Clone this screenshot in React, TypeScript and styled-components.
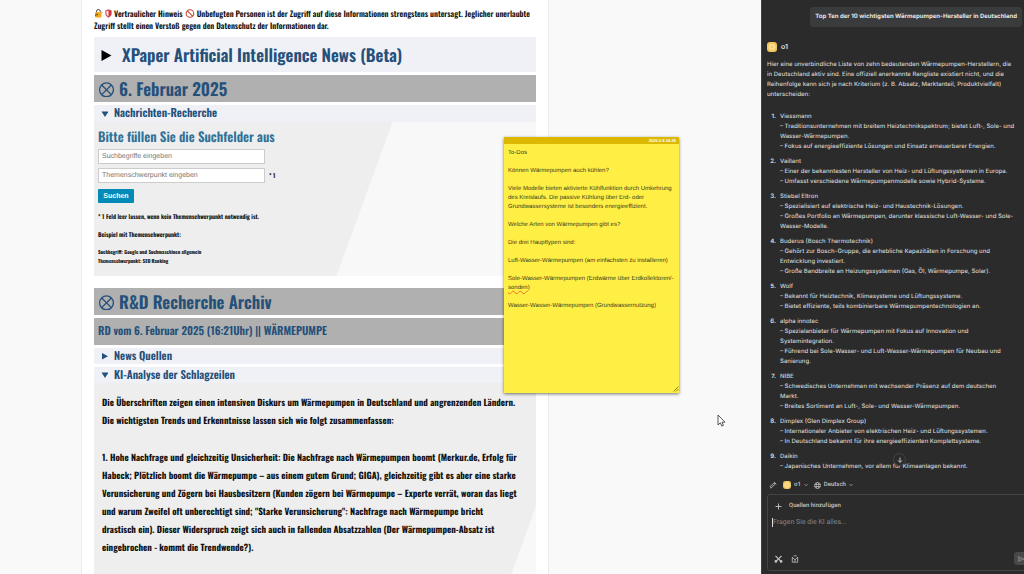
import React from "react";
import styled, { createGlobalStyle } from "styled-components";

const GlobalStyle = createGlobalStyle`
  *, *::before, *::after { box-sizing: border-box; }
  body { margin: 0; background: #f9f9f9; overflow: hidden; text-rendering: geometricPrecision; }
  h1, h2, h3, p, ol { margin: 0; padding: 0; }
  button, input, textarea { font: inherit; margin: 0; text-rendering: inherit; }
`;

const condensed = `Oswald, "Liberation Sans Narrow", "Open Sans Condensed", "Liberation Sans", sans-serif`;

const Page = styled.div`
  position: relative;
  display: grid;
  grid-template-columns: minmax(0, 1fr) 263px;
  height: 100vh;
  overflow: hidden;
`;

const Main = styled.main`
  background: #f9f9f9;
  padding-left: 81px;
  overflow: hidden;
`;

const Article = styled.article`
  display: flex;
  flex-direction: column;
  gap: 3px;
  max-width: 468px;
  min-height: 100vh;
  padding: 8px 12px 0;
  background: #fff;
  border: solid #ececec;
  border-width: 0 1px;
  font-family: ${condensed};
  font-weight: 700;
  color: #111;
`;

const Notice = styled.p`
  font-size: 8px;
  line-height: 12px;
  white-space: nowrap;
  margin-bottom: 2px;
  font-weight: 600;
  svg { vertical-align: -1px; margin-right: 2px; }
`;

const Bar = styled.div<{ $tone: "light" | "grey"; $h: number }>`
  display: flex;
  align-items: center;
  height: ${(p) => p.$h}px;
  flex: none;
  padding: 0 4px;
  background: ${(p) => (p.$tone === "grey" ? "#b0b0b0" : "#f0f1f6")};
  color: #24507a;
  white-space: nowrap;
`;

const Heading = styled.h2<{ $size: number }>`
  font-size: ${(p) => p.$size}px;
  line-height: 1;
  font-weight: 600;
`;

const Marker = styled.svg<{ $gap: number }>`
  flex: none;
  margin-right: ${(p) => p.$gap}px;
`;

const Section = styled.section`
  display: flex;
  flex-direction: column;
`;

const Archive = styled(Section)`
  gap: 3px;
  margin-top: 9px;
`;

const Panel = styled.div<{ $edge: number }>`
  background: linear-gradient(110deg, #eee ${(p) => p.$edge}px, #f8f8f8 ${(p) => p.$edge + 1}px);
`;

const SearchForm = styled.form`
  display: flex;
  flex-direction: column;
  align-items: flex-start;
  padding: 6px 4px 1px;
`;

const FormTitle = styled(Heading)`
  color: #2f7197;
  line-height: 16px;
  margin-bottom: 5px;
`;

const FieldRow = styled.label`
  display: flex;
  align-items: center;
  gap: 4px;
  margin-bottom: 4px;
  font-size: 6px;
`;

const Field = styled.input`
  width: 167px;
  height: 15px;
  padding: 0 3px;
  border: 1px solid #ccc;
  background: #fff;
  font: 7px "Liberation Sans", sans-serif;
  &::placeholder { color: #757575; opacity: 1; }
`;

const SearchButton = styled.button`
  height: 14px;
  width: 36px;
  margin: 2px 0 9px;
  padding: 0;
  border: 0;
  border-radius: 1px;
  background: #008ab5;
  color: #fff;
  font: 700 7px "Liberation Sans", sans-serif;
`;

const Hint = styled.p<{ $size: number }>`
  font-size: ${(p) => p.$size}px;
  line-height: 9px;
  margin-bottom: 9px;
  white-space: nowrap;
`;

const Analysis = styled.div`
  padding: 10px 8px 40px;
  font-size: 9px;
  line-height: 18px;
  white-space: nowrap;
  p + p { margin-top: 19px; }
`;

const Note = styled.aside`
  position: absolute;
  left: 504px;
  top: 137px;
  width: 175px;
  height: 256px;
  background: #ffef45;
  box-shadow: 0 1px 3px rgba(0, 0, 0, 0.55);
  font-family: "Liberation Sans", sans-serif;
  color: #3b3a20;
`;

const NoteHeader = styled.header`
  height: 7px;
  padding-right: 3px;
  background: #dcb900;
  color: #fff;
  text-align: right;
  font-size: 4px;
  font-weight: 700;
  line-height: 7px;
`;

const NoteBody = styled.div`
  padding: 5px 4px;
  font-size: 6px;
  line-height: 9px;
  white-space: nowrap;
  p + p { margin-top: 9px; }
`;

const Misspelt = styled.span`
  text-decoration: underline wavy #f07020 1px;
`;

const Grip = styled.svg`
  position: absolute;
  right: 0;
  bottom: 1px;
`;

const Pointer = styled.svg`
  position: absolute;
  left: 717px;
  top: 414px;
`;

const Sidebar = styled.aside`
  position: relative;
  display: flex;
  flex-direction: column;
  min-width: 0;
  height: 100vh;
  padding: 7px 2px 3px 5px;
  overflow: hidden;
  background: #2b2b2b;
  border-left: 1px solid #414141;
  color: #d2d2d2;
  font: 500 6px/10px Inter, Roboto, sans-serif;
`;

const Chat = styled.div`
  display: flex;
  flex-direction: column;
  flex: 1;
  min-height: 0;
  overflow: hidden;
  white-space: nowrap;
`;

const Question = styled.p`
  align-self: flex-end;
  padding: 5px;
  border-radius: 3px;
  background: #3a3b3d;
  color: #e6e6e6;
  font-weight: 700;
`;

const Author = styled.div`
  display: flex;
  align-items: center;
  gap: 4px;
  margin: 15px 0 8px;
  color: #e6e6e6;
  font-size: 7px;
  font-weight: 600;
`;

const Answers = styled.ol`
  display: flex;
  flex-direction: column;
  gap: 5px;
  margin-top: 12px;
  list-style: none;
`;

const Answer = styled.li`
  display: grid;
  grid-template-columns: 9px 1fr;
  column-gap: 4px;
  b { font-weight: 700; text-align: right; }
`;

const Options = styled.div`
  display: flex;
  align-items: center;
  gap: 6px;
  height: 18px;
  flex: none;
  padding-left: 2px;
`;

const Plain = styled.button`
  display: flex;
  align-items: center;
  gap: 3px;
  padding: 0;
  border: 0;
  background: none;
  color: #c4c4c4;
  font-family: Roboto, sans-serif;
  font-size: 6px;
  line-height: 10px;
  font-weight: 500;
`;

const Composer = styled.form`
  display: flex;
  flex-direction: column;
  flex: none;
  margin-right: -11px;
  height: 77px;
  padding: 6px 4px 5px 4px;
  border: 1px solid #444;
  border-radius: 3px;
`;

const Sources = styled(Plain)`
  gap: 7px;
  padding-left: 3px;
`;

const Prompt = styled.textarea`
  height: 9px;
  margin: 7px 0 auto;
  padding: 0;
  border: 0;
  border-left: 1px solid #ddd;
  background: none;
  color: #d2d2d2;
  font-family: Roboto, sans-serif;
  font-size: 7px;
  font-weight: 400;
  line-height: 9px;
  resize: none;
  overflow: hidden;
  &::placeholder { color: #858585; opacity: 1; }
`;

const Tools = styled.div`
  display: flex;
  align-items: center;
  gap: 8px;
  padding-left: 2px;
`;

const Send = styled.button`
  display: grid;
  place-items: center;
  width: 14px;
  height: 13px;
  margin-left: auto;
  padding: 0;
  border: 0;
  border-radius: 3px;
  background: #484848;
  color: #858585;
`;

const ScrollDown = styled.button`
  position: absolute;
  left: 131px;
  bottom: 108px;
  display: grid;
  place-items: center;
  width: 13px;
  height: 13px;
  padding: 0;
  border: 1px solid #444;
  border-radius: 50%;
  background: #2b2b2b;
  color: #d2d2d2;
`;

const Crossed = () => (
  <Marker $gap={5} width="16" height="16" viewBox="0 0 16 16" fill="none" stroke="#24507a" strokeWidth="1.3">
    <circle cx="8.5" cy="8.8" r="6.9" />
    <path d="M3.700 4l9.600 9.600M13.300 4l-9.600 9.600" />
  </Marker>
);

const Triangle = ({ open = false }: { open?: boolean }) => (
  <Marker $gap={6} width="10" height="10" viewBox="0 0 10 10" fill="#24507a">
    <path d={open ? "M3.5 2.5h7L7 8z" : "M4 2l6 3.2-6 3.3z"} />
  </Marker>
);

const Badge = ({ size }: { size: number }) => (
  <svg width={size} height={size} viewBox="0 0 10 10">
    <rect width="10" height="10" rx="3" fill="#f2c45c" />
    <circle cx="5" cy="5" r="3.3" fill="#fbe2a0" />
    <path d="M5 2.2v5.6M2.6 3.6l4.8 2.8M7.4 3.6L2.6 6.4" stroke="#f0bd50" strokeWidth=".5" />
  </svg>
);

const Chevron = () => (
  <svg width="4" height="4" viewBox="0 0 4 4" fill="none" stroke="currentColor" strokeWidth=".7">
    <path d="M.5 1.2L2 2.7l1.5-1.5" />
  </svg>
);

const makers: { name: string; lines: string[] }[] = [
  { name: "Viessmann", lines: ["– Traditionsunternehmen mit breitem Heiztechnikspektrum; bietet Luft-, Sole- und", "Wasser-Wärmepumpen.", "– Fokus auf energieeffiziente Lösungen und Einsatz erneuerbarer Energien."] },
  { name: "Vaillant", lines: ["– Einer der bekanntesten Hersteller von Heiz- und Lüftungssystemen in Europa.", "– Umfasst verschiedene Wärmepumpenmodelle sowie Hybrid-Systeme."] },
  { name: "Stiebel Eltron", lines: ["– Spezialisiert auf elektrische Heiz- und Haustechnik-Lösungen.", "– Großes Portfolio an Wärmepumpen, darunter klassische Luft-Wasser- und Sole-", "Wasser-Modelle."] },
  { name: "Buderus (Bosch Thermotechnik)", lines: ["– Gehört zur Bosch-Gruppe, die erhebliche Kapazitäten in Forschung und", "Entwicklung investiert.", "– Große Bandbreite an Heizungssystemen (Gas, Öl, Wärmepumpe, Solar)."] },
  { name: "Wolf", lines: ["– Bekannt für Heiztechnik, Klimasysteme und Lüftungssysteme.", "– Bietet effiziente, teils kombinierbare Wärmepumpentechnologien an."] },
  { name: "alpha innotec", lines: ["– Spezialanbieter für Wärmepumpen mit Fokus auf Innovation und", "Systemintegration.", "– Führend bei Sole-Wasser- und Luft-Wasser-Wärmepumpen für Neubau und", "Sanierung."] },
  { name: "NIBE", lines: ["– Schwedisches Unternehmen mit wachsender Präsenz auf dem deutschen", "Markt.", "– Breites Sortiment an Luft-, Sole- und Wasser-Wärmepumpen."] },
  { name: "Dimplex (Glen Dimplex Group)", lines: ["– Internationaler Anbieter von elektrischen Heiz- und Lüftungssystemen.", "– In Deutschland bekannt für ihre energieeffizienten Komplettsysteme."] },
  { name: "Daikin", lines: ["– Japanisches Unternehmen, vor allem für Klimaanlagen bekannt."] },
];

const Lines = ({ items }: { items: string[] }) => (
  <>
    {items.map((t, i) => (
      <React.Fragment key={t}>
        {i > 0 && <br />}
        {t}
      </React.Fragment>
    ))}
  </>
);

export default function App() {
  return (
    <Page>
      <GlobalStyle />
      <Main>
        <Article>
          <Notice>
            <svg width="9" height="9" viewBox="0 0 9 9">
              <path d="M2.5 4V2.4a1.9 1.9 0 013.8 0V4" fill="none" stroke="#444" strokeWidth="1" />
              <rect x="1" y="3.2" width="6.4" height="5.3" rx=".8" fill="#f0a818" />
              <path d="M1 6.5l3-1.4" stroke="#5b4310" strokeWidth="1" />
              <circle cx="7.3" cy="3.6" r="1.2" fill="#e8b84a" />
            </svg>
            <svg width="7" height="9" viewBox="0 0 7 9">
              <path d="M3.5.6l3 1v3c0 2-1.400 3.100-3 3.900C1.900 7.700.5 6.600.5 4.600v-3z" fill="#e02b36" stroke="#999" strokeWidth=".5" />
              <path d="M3.500 1.500v5.800C2.300 6.600 1.400 6 1.400 4.600V2.200z" fill="#f7f7f7" />
            </svg>
            Vertraulicher Hinweis{" "}
            <svg width="10" height="9" viewBox="0 0 10 9" fill="none" stroke="#c8452f" strokeWidth="1.100">
              <circle cx="5" cy="4.500" r="3.800" />
              <path d="M2.300 1.800l5.400 5.400" />
            </svg>
            Unbefugten Personen ist der Zugriff auf diese Informationen strengstens untersagt. Jeglicher unerlaubte
            <br />
            Zugriff stellt einen Verstoß gegen den Datenschutz der Informationen dar.
          </Notice>

          <Bar $tone="light" $h={35}>
            <Marker $gap={7} width="17" height="14" viewBox="0 0 17 14" fill="#000">
              <path d="M3.500 2l10 5.500-10 5.500z" />
            </Marker>
            <Heading as="h1" $size={17}>XPaper Artificial Intelligence News (Beta)</Heading>
          </Bar>

          <Bar $tone="grey" $h={27}>
            <Crossed />
            <Heading $size={17}>6. Februar 2025</Heading>
          </Bar>

          <Section>
            <Bar $tone="light" $h={17}>
              <Triangle open />
              <Heading as="h3" $size={11}>Nachrichten-Recherche</Heading>
            </Bar>
            <Panel $edge={280}>
              <SearchForm onSubmit={(e) => e.preventDefault()}>
                <FormTitle $size={13}>Bitte füllen Sie die Suchfelder aus</FormTitle>
                <FieldRow>
                  <Field placeholder="Suchbegriffe eingeben" aria-label="Suchbegriffe" />
                </FieldRow>
                <FieldRow>
                  <Field placeholder="Themenschwerpunkt eingeben" aria-label="Themenschwerpunkt" />
                  <span>* 1</span>
                </FieldRow>
                <SearchButton>Suchen</SearchButton>
                <Hint $size={6}>* 1 Feld leer lassen, wenn kein Themenschwerpunkt notwendig ist.</Hint>
                <Hint $size={6}>Beispiel mit Themenschwerpunkt:</Hint>
                <Hint $size={5}>
                  Suchbegriff: Google und Suchmaschinen allgemein
                  <br />
                  Themenschwerpunkt: SEO Ranking
                </Hint>
              </SearchForm>
            </Panel>
          </Section>

          <Archive>
            <Bar $tone="grey" $h={27}>
              <Crossed />
              <Heading $size={17}>R&amp;D Recherche Archiv</Heading>
            </Bar>
            <Bar $tone="grey" $h={27}>
              <Heading as="h3" $size={11}>RD vom 6. Februar 2025 (16:21Uhr) || WÄRMEPUMPE</Heading>
            </Bar>
            <Bar $tone="light" $h={16}>
              <Triangle />
              <Heading as="h3" $size={11}>News Quellen</Heading>
            </Bar>
            <Section>
              <Bar $tone="light" $h={16}>
                <Triangle open />
                <Heading as="h3" $size={11}>KI-Analyse der Schlagzeilen</Heading>
              </Bar>
              <Panel $edge={457}>
                <Analysis>
                  <p>
                    <Lines
                      items={[
                        "Die Überschriften zeigen einen intensiven Diskurs um Wärmepumpen in Deutschland und angrenzenden Ländern.",
                        "Die wichtigsten Trends und Erkenntnisse lassen sich wie folgt zusammenfassen:",
                      ]}
                    />
                  </p>
                  <p>
                    <Lines
                      items={[
                        "1. Hohe Nachfrage und gleichzeitig Unsicherheit: Die Nachfrage nach Wärmepumpen boomt (Merkur.de, Erfolg für",
                        "Habeck; Plötzlich boomt die Wärmepumpe – aus einem gutem Grund; GIGA), gleichzeitig gibt es aber eine starke",
                        "Verunsicherung und Zögern bei Hausbesitzern (Kunden zögern bei Wärmepumpe – Experte verrät, woran das liegt",
                        "und warum Zweifel oft unberechtigt sind; \"Starke Verunsicherung\": Nachfrage nach Wärmepumpe bricht",
                        "drastisch ein). Dieser Widerspruch zeigt sich auch in fallenden Absatzzahlen (Der Wärmepumpen-Absatz ist",
                        "eingebrochen - kommt die Trendwende?).",
                      ]}
                    />
                  </p>
                </Analysis>
              </Panel>
            </Section>
          </Archive>
        </Article>
      </Main>

      <Sidebar>
        <Chat>
          <Question>Top Ten der 10 wichtigsten Wärmepumpen-Hersteller in Deutschland</Question>
          <Author>
            <Badge size={10} />
            o1
          </Author>
          <p>
            <Lines
              items={[
                "Hier eine unverbindliche Liste von zehn bedeutenden Wärmepumpen-Herstellern, die",
                "in Deutschland aktiv sind. Eine offiziell anerkannte Rangliste existiert nicht, und die",
                "Reihenfolge kann sich je nach Kriterium (z. B. Absatz, Marktanteil, Produktvielfalt)",
                "unterscheiden:",
              ]}
            />
          </p>
          <Answers>
            {makers.map((m, i) => (
              <Answer key={m.name}>
                <b>{i + 1}.</b>
                <span>
                  <Lines items={[m.name, ...m.lines]} />
                </span>
              </Answer>
            ))}
          </Answers>
        </Chat>
        <ScrollDown aria-label="Nach unten">
          <svg width="6" height="6" viewBox="0 0 6 6" fill="none" stroke="currentColor" strokeWidth=".9">
            <path d="M3 .5v4.800M1 3.400l2 2 2-2" />
          </svg>
        </ScrollDown>
        <Options>
          <Plain aria-label="Werkzeuge">
            <svg width="8" height="8" viewBox="0 0 8 8" fill="none" stroke="currentColor" strokeWidth=".8">
              <path d="M1 5.500L5.200 2l1 1.200L2.200 6.800zM5 .8l2.200 2.600M1.200 7.200l1-.6" />
            </svg>
          </Plain>
          <Plain>
            <Badge size={8} />
            o1
            <Chevron />
          </Plain>
          <Plain>
            <svg width="7" height="7" viewBox="0 0 7 7" fill="none" stroke="currentColor" strokeWidth=".7">
              <circle cx="3.500" cy="3.500" r="3" />
              <ellipse cx="3.500" cy="3.500" rx="1.300" ry="3" />
              <path d="M.7 2.500h5.600M.7 4.500h5.600" />
            </svg>
            Deutsch
            <Chevron />
          </Plain>
        </Options>
        <Composer onSubmit={(e) => e.preventDefault()}>
          <Sources type="button">
            <svg width="7" height="7" viewBox="0 0 7 7" fill="none" stroke="currentColor" strokeWidth=".9">
              <path d="M3.500.5v6M.5 3.500h6" />
            </svg>
            Quellen hinzufügen
          </Sources>
          <Prompt placeholder="Fragen Sie die KI alles..." aria-label="Frage" />
          <Tools>
            <Plain type="button" aria-label="Ausschneiden">
              <svg width="9" height="8" viewBox="0 0 9 8" fill="none" stroke="currentColor" strokeWidth="1.200">
                <path d="M1.500.8l5 5M7.500.8l-5 5" />
                <circle cx="1.900" cy="6.400" r=".8" />
                <circle cx="7.100" cy="6.400" r=".8" />
              </svg>
            </Plain>
            <Plain type="button" aria-label="Vorlagen">
              <svg width="8" height="8" viewBox="0 0 8 8" fill="none" stroke="currentColor" strokeWidth=".8">
                <path d="M1.300 2.200v5h5.400v-5M1 2.200l3 2.600 3-2.600M2.600.9h3.200M3 6h2" />
              </svg>
            </Plain>
            <Send aria-label="Senden">
              <svg width="8" height="8" viewBox="0 0 8 8" fill="none" stroke="currentColor" strokeWidth=".9">
                <path d="M1.200 1.500L7 4 1.200 6.500 2 4zM2 4h2.500" />
              </svg>
            </Send>
          </Tools>
        </Composer>
      </Sidebar>

      <Note>
        <NoteHeader>2025-2-6 16:26</NoteHeader>
        <NoteBody>
          <p>To-Dos</p>
          <p>Können Wärmepumpen auch kühlen?</p>
          <p>
            <Lines
              items={[
                "Viele Modelle bieten aktivierte Kühlfunktion durch Umkehrung",
                "des Kreislaufs. Die passive Kühlung über Erd- oder",
                "Grundwassersysteme ist besonders energieeffizient.",
              ]}
            />
          </p>
          <p>Welche Arten von Wärmepumpen gibt es?</p>
          <p>Die drei Haupttypen sind:</p>
          <p>Luft-Wasser-Wärmepumpen (am einfachsten zu installieren)</p>
          <p>
            Sole-Wasser-Wärmepumpen (Erdwärme über Erdkollektoren/-
            <br />
            <Misspelt>sonden</Misspelt>)
          </p>
          <p>Wasser-Wasser-Wärmepumpen (Grundwassernutzung)</p>
        </NoteBody>
        <Grip width="6" height="6" viewBox="0 0 6 6" stroke="#6b641c" strokeWidth=".8">
          <path d="M.5 5.500l5-5M3 5.500l2.500-2.500" />
        </Grip>
      </Note>
      <Pointer width="9" height="13" viewBox="0 0 9 13">
        <path d="M1 1v10l2.300-2.200 1.500 3.300 1.600-.7L5 8.200h3z" fill="#fff" stroke="#444" strokeWidth=".9" />
      </Pointer>
    </Page>
  );
}
